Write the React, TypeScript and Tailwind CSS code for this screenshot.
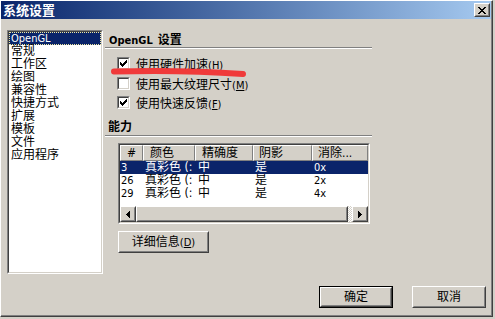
import React from "react";

const FONT = "font-['DejaVu_Sans_Condensed','Liberation_Sans','Noto_Sans_CJK_SC',sans-serif]";

type P = { children?: React.ReactNode; className?: string };

function Raised({ children, className = "" }: P) {
  return (
    <div className={"border border-t-white border-l-white border-r-[#404040] border-b-[#404040] bg-[#d4d0c8] " + className}>
      <div className="w-full h-full border border-t-[#d4d0c8] border-l-[#d4d0c8] border-r-[#808080] border-b-[#808080] flex items-center justify-center">
        {children}
      </div>
    </div>
  );
}

function Sunken({ children, className = "" }: P) {
  return (
    <div className={"border border-t-[#808080] border-l-[#808080] border-r-white border-b-white " + className}>
      <div className="w-full h-full border border-t-[#404040] border-l-[#404040] border-r-[#d4d0c8] border-b-[#d4d0c8] bg-white overflow-hidden">
        {children}
      </div>
    </div>
  );
}

function Pixels({ rows, w, h, color = "#000" }: { rows: string[]; w: number; h: number; color?: string }) {
  const rects: React.ReactNode[] = [];
  rows.forEach((r, y) =>
    r.split("").forEach((c, x) => {
      if (c === "#") rects.push(<rect key={x + "-" + y} x={x} y={y} width={1} height={1} fill={color} />);
    })
  );
  return (
    <svg width={w} height={h} viewBox={`0 0 ${w} ${h}`} shapeRendering="crispEdges" className="block">
      {rects}
    </svg>
  );
}

const CHECK = ["......#", ".....##", "#...###", "##.###.", "#####..", ".###...", "..#...."];
const XMARK = ["##....##", ".##..##.", "..####..", "...##...", "..####..", ".##..##.", "##....##"];
const LEFT = ["...#", "..##", ".###", "####", ".###", "..##", "...#"];
const RIGHT = ["#...", "##..", "###.", "####", "###.", "##..", "#..."];

function Checkbox({ checked }: { checked: boolean }) {
  return (
    <Sunken className="w-[13px] h-[13px] shrink-0">
      <div className="w-full h-full flex items-center justify-center">
        {checked && <Pixels rows={CHECK} w={7} h={7} />}
      </div>
    </Sunken>
  );
}

function Etched() {
  return <div className="w-full border-t border-t-[#808080] border-b border-b-white" />;
}

const items = ["OpenGL", "常规", "工作区", "绘图", "兼容性", "快捷方式", "扩展", "模板", "文件", "应用程序"];

const cols = [
  { w: "w-[23px]", hp: "pl-[6px]", rp: "pl-[1px]", h: "#" },
  { w: "w-[52px]", hp: "pl-[6px]", rp: "pl-[2px]", h: "颜色" },
  { w: "w-[58px]", hp: "pl-[6px]", rp: "pl-[3px]", h: "精确度" },
  { w: "w-[59px]", hp: "pl-[5px]", rp: "pl-[2px]", h: "阴影" },
  { w: "w-[56px]", hp: "pl-[5px]", rp: "pl-[2px]", h: "消除..." },
];

const rows = [
  ["3", "真彩色 (:", "中", "是", "0x"],
  ["26", "真彩色 (:", "中", "是", "2x"],
  ["29", "真彩色 (:", "中", "是", "4x"],
];

function Label({ text, key2 }: { text: string; key2: string }) {
  return (
    <span className="text-[12px] leading-[13px] text-black whitespace-nowrap">
      {text}
      <span className="text-[11px]">
        (<span className="underline underline-offset-1">{key2}</span>)
      </span>
    </span>
  );
}

export default function App() {
  return (
    <div className={"relative w-[495px] h-[319px] bg-[#d4d0c8] " + FONT}>
      <div className="w-[493px] h-[317px] border-t border-l border-t-white border-l-white border-r border-b border-r-[#404040] border-b-[#404040] bg-[#d4d0c8]">
        <div className="w-full h-full border-r border-b border-r-[#808080] border-b-[#808080] flex flex-col">
          {/* Title bar */}
          <div className="h-[18px] shrink-0 bg-gradient-to-r from-[#0a246a] to-[#a6caf0] flex items-center justify-between pl-[2px] pr-[1px]">
            <span className="text-white font-bold text-[13px] leading-[14px] font-['Noto_Sans_CJK_SC',sans-serif]">系统设置</span>
            <Raised className="w-[16px] h-[14px]">
              <Pixels rows={XMARK} w={8} h={7} />
            </Raised>
          </div>

          {/* Content */}
          <div className="flex flex-col pl-[6px] pt-[11px]">
            <div className="flex h-[244px]">
              {/* List */}
              <Sunken className="w-[96px] h-[244px] shrink-0">
                <div className="flex flex-col">
                  {items.map((it, i) =>
                    i === 0 ? (
                      <div key={it} className="h-[13px] bg-[#0a246a] text-white border border-dotted border-[#f0e8a0] flex items-center pl-[1px]">
                        <span className="text-[11px] leading-[11px]">{it}</span>
                      </div>
                    ) : (
                      <div key={it} className="h-[13px] flex items-center pl-[2px] text-[12px] leading-[13px] text-black">
                        {it}
                      </div>
                    )
                  )}
                </div>
              </Sunken>

              {/* Right panel */}
              <div className="ml-[2px] w-[267px] flex flex-col">
                <div className="h-[17px] pl-[4px] pt-[2px] flex items-start">
                  <span className="font-bold text-black whitespace-nowrap leading-[13px]">
                    <span className="text-[11px]">OpenGL</span> <span className="text-[12px]">设置</span>
                  </span>
                </div>
                <Etched />
                <div className="flex flex-col pl-[12px] pt-[8px]">
                  <div className="flex items-center h-[13px]">
                    <Checkbox checked />
                    <div className="ml-[6px]"><Label text="使用硬件加速" key2="H" /></div>
                  </div>
                  <div className="flex items-center h-[13px] mt-[7px]">
                    <Checkbox checked={false} />
                    <div className="ml-[6px]"><Label text="使用最大纹理尺寸" key2="M" /></div>
                  </div>
                  <div className="flex items-center h-[13px] mt-[6px]">
                    <Checkbox checked />
                    <div className="ml-[6px]"><Label text="使用快速反馈" key2="F" /></div>
                  </div>
                </div>

                <div className="h-[17px] pl-[3px] pt-[3px] mt-[9px] flex items-start">
                  <span className="font-bold text-[12px] leading-[13px] text-black">能力</span>
                </div>
                <Etched />

                {/* Table */}
                <Sunken className="ml-[13px] mt-[6px] w-[252px] h-[81px]">
                  <div className="flex flex-col h-full">
                    <div className="flex h-[16px] shrink-0">
                      {cols.map((c) => (
                        <div key={c.h} className={c.w + " h-full shrink-0 border-t border-l border-t-white border-l-white border-r border-b border-r-[#808080] border-b-[#808080] bg-[#d4d0c8] flex items-center overflow-hidden whitespace-nowrap " + c.hp}>
                          <span className="text-[12px] leading-[13px] text-black">{c.h}</span>
                        </div>
                      ))}
                    </div>
                    {rows.map((r, ri) => (
                      <div key={ri} className={"flex h-[13px] shrink-0 " + (ri === 0 ? "bg-[#0a246a] text-white" : "text-black")}>
                        {r.map((v, ci) => (
                          <div key={ci} className={cols[ci].w + " h-full shrink-0 flex items-center overflow-hidden whitespace-nowrap " + cols[ci].rp}>
                            <span className={ci === 0 || ci === 4 ? "text-[11px] leading-[13px]" : "text-[12px] leading-[13px]"}>{v}</span>
                          </div>
                        ))}
                      </div>
                    ))}
                    <div className="flex-1" />
                    <div className="flex h-[16px] shrink-0 bg-[#e8e6e1]">
                      <Raised className="w-[16px] h-[16px] shrink-0">
                        <Pixels rows={LEFT} w={4} h={7} />
                      </Raised>
                      <Raised className="w-[212px] h-[16px] shrink-0" />
                      <div className="flex-1 bg-[repeating-conic-gradient(#ffffff_0_25%,#d4d0c8_0_50%)] bg-[length:2px_2px]" />
                      <Raised className="w-[16px] h-[16px] shrink-0">
                        <Pixels rows={RIGHT} w={4} h={7} />
                      </Raised>
                    </div>
                  </div>
                </Sunken>

                <Raised className="ml-[13px] mt-[7px] w-[91px] h-[22px]">
                  <span className="text-[12px] leading-[13px] text-black whitespace-nowrap">
                    详细信息<span className="text-[11px]">(<span className="underline underline-offset-1">D</span>)</span>
                  </span>
                </Raised>
              </div>
            </div>

            {/* Bottom buttons */}
            <div className="flex justify-end mt-[12px] pr-[5px] gap-[19px]">
              <div className="w-[74px] h-[22px] border border-black">
                <Raised className="w-full h-full">
                  <span className="text-[12px] leading-[13px] text-black">确定</span>
                </Raised>
              </div>
              <Raised className="w-[74px] h-[22px]">
                <span className="text-[12px] leading-[13px] text-black">取消</span>
              </Raised>
            </div>
          </div>
        </div>
      </div>

      {/* Red annotation stroke */}
      <svg className="absolute left-0 top-0 pointer-events-none" width={495} height={319} viewBox="0 0 495 319">
        <path d="M114,71.5 Q180,69.5 243,74" stroke="#f03a3a" strokeWidth={6} strokeLinecap="round" fill="none" />
      </svg>
    </div>
  );
}
